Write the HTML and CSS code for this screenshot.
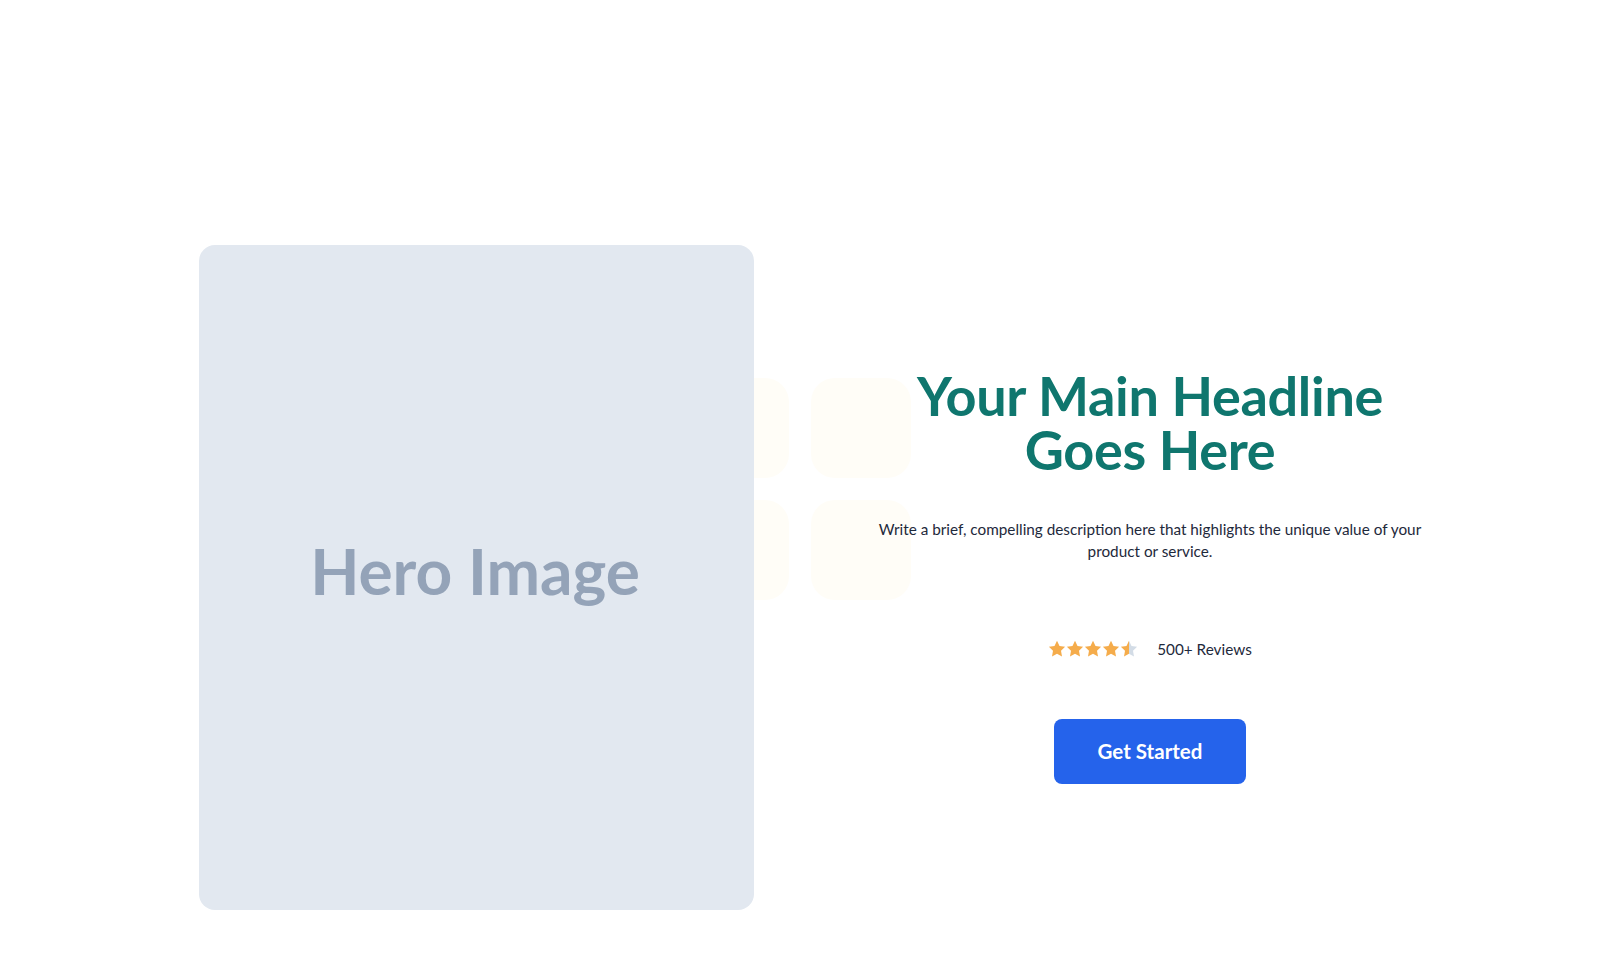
FILE: index.html
```html
<!DOCTYPE html>
<html lang="en">
<head>
<meta charset="utf-8">
<title>Hero</title>
<link rel="stylesheet" href="styles.css">
</head>
<body>
<section class="hero">
  <div class="decor">
    <div class="tile"></div><div class="tile"></div>
    <div class="tile"></div><div class="tile"></div>
  </div>
  <div class="media">
    <div class="media-label">Hero Image</div>
  </div>
  <div class="content">
    <h1 class="headline">Your Main Headline<br>Goes Here</h1>
    <p class="lead">Write a brief, compelling description here that highlights the unique value of your product or service.</p>
    <div class="rating">
      <svg class="stars" width="90" height="18" viewBox="0 0 90 18" aria-hidden="true">
        <defs>
          <linearGradient id="half" x1="0" x2="1" y1="0" y2="0">
            <stop offset="0.5" stop-color="#f5ac4b"/>
            <stop offset="0.5" stop-color="#d3dce6"/>
          </linearGradient>
          <path id="star" d="M9 0.8l2.5 5.2 5.6 0.8-4.1 4 1 5.6L9 13.7l-5 2.7 1-5.6-4.1-4 5.6-0.8z"/>
        </defs>
        <use href="#star" x="0" fill="#f5ac4b"/>
        <use href="#star" x="18" fill="#f5ac4b"/>
        <use href="#star" x="36" fill="#f5ac4b"/>
        <use href="#star" x="54" fill="#f5ac4b"/>
        <use href="#star" x="72" fill="url(#half)"/>
      </svg>
      <span class="rating-text">500+ Reviews</span>
    </div>
    <a class="cta" href="#">Get Started</a>
  </div>
</section>
</body>
</html>
```
FILE: styles.css
```css
* { box-sizing: border-box; }
html, body { margin: 0; padding: 0; background: #ffffff; }
body {
  font-family: "Lato", "Inter", sans-serif;
  color: #1e293b;
  height: 978px;
  overflow: hidden;
}
.hero {
  position: relative;
  display: grid;
  grid-template-columns: 555px 560px;
  column-gap: 116px;
  align-items: center;
  padding: 245px 0 0 199px;
}
.decor {
  position: absolute;
  left: 689px;
  top: 378px;
  display: grid;
  grid-template-columns: 100px 100px;
  grid-auto-rows: 100px;
  gap: 22px 22px;
  z-index: 0;
}
.tile {
  background: #fffdf7;
  border-radius: 24px;
}
.media {
  position: relative;
  z-index: 1;
  height: 665px;
  background: #e2e8f0;
  border-radius: 16px;
  display: flex;
  align-items: center;
  justify-content: center;
}
.media-label {
  font-family: "Lato", sans-serif;
  font-weight: 700;
  font-size: 64px;
  color: #94a3b8;
  margin-top: -14px;
  margin-left: -3px;
}
.content {
  position: relative;
  z-index: 1;
  display: flex;
  flex-direction: column;
  align-items: center;
  text-align: center;
  margin-top: -2px;
}
.headline {
  margin: 0 0 42px;
  font-size: 54px;
  line-height: 54px;
  font-weight: 700;
  color: #0f766e;
  letter-spacing: -0.3px;
}
.lead {
  margin: 0 0 77px;
  font-size: 15.3px;
  line-height: 21.5px;
  color: #1e293b;
}
.rating {
  display: flex;
  align-items: center;
  gap: 19px;
  height: 20px;
  margin-bottom: 60px;
}
.stars { display: block; }
.rating-text {
  font-size: 15.3px;
  color: #1e293b;
}
.cta {
  display: inline-block;
  background: #2563eb;
  color: #ffffff;
  text-decoration: none;
  font-size: 20.5px;
  font-weight: 700;
  line-height: 25px;
  padding: 20px 44px;
  border-radius: 8px;
}
```
